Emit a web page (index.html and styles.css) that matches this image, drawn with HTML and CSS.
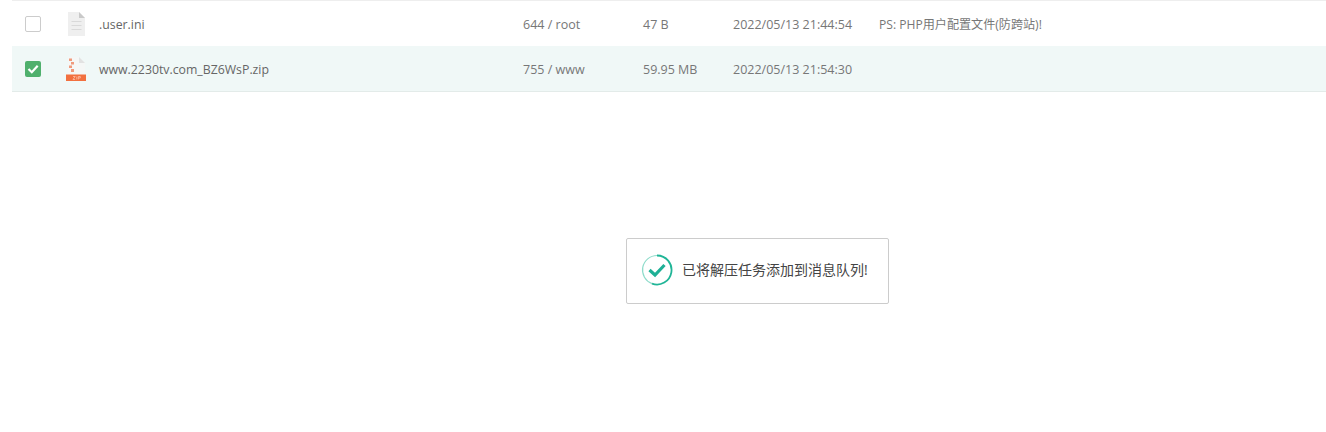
FILE: index.html
```html
<!DOCTYPE html>
<html lang="zh">
<head>
<meta charset="utf-8">
<title>文件管理</title>
<link rel="stylesheet" href="styles.css">
</head>
<body>
<div class="list">
  <div class="row">
    <span class="cell-check"><span class="checkbox"></span></span>
    <span class="cell-icon">
      <svg class="file-icon" viewBox="0 0 20 24" width="20" height="24">
        <path d="M2 0H13L19 6V24H2Z" fill="#efefef"/>
        <path d="M13 0L19 6H13Z" fill="#c9c9c9"/>
        <path d="M5.500 9.500H15.500M5.500 13.500H15.500M5.500 17.500H15.500" stroke="#d9d9d9" stroke-width="1.200" fill="none"/>
      </svg>
    </span>
    <span class="cell-text name">.user.ini</span>
    <span class="cell-text perm">644 / root</span>
    <span class="cell-text size">47 B</span>
    <span class="cell-text date">2022/05/13 21:44:54</span>
    <span class="cell-text note">PS: PHP用户配置文件(防跨站)!</span>
  </div>
  <div class="row selected">
    <span class="cell-check">
      <span class="checkbox checked">
        <svg viewBox="0 0 16 16" width="16" height="16"><path d="M3.500 8L6.800 11.200L12.700 4.800" fill="none" stroke="#fff" stroke-width="2.200"/></svg>
      </span>
    </span>
    <span class="cell-icon">
      <svg class="file-icon" viewBox="0 0 20 24" width="20" height="24">
        <path d="M2 0H13L19 6V24H2Z" fill="#f5f7f6"/>
        <path d="M13 0L19 6H13Z" fill="#e2e2e2"/>
        <path d="M3 1.500H6V4H3ZM5 5H8V7.500H5ZM3 8.500H6V11H3ZM5 12H8V15H5Z" fill="#f09a7c"/>
        <rect x="0" y="17.500" width="20" height="6.500" fill="#f2703f"/>
        <path d="M7 19.500H9.200L7 22.500H9.200M10.800 19.500V22.500M12.300 22.500V19.500H14.300V21H12.300" fill="none" stroke="#ffc9b4" stroke-width=".7"/>
      </svg>
    </span>
    <span class="cell-text name">www.2230tv.com_BZ6WsP.zip</span>
    <span class="cell-text perm">755 / www</span>
    <span class="cell-text size">59.95 MB</span>
    <span class="cell-text date">2022/05/13 21:54:30</span>
  </div>
</div>
<div class="toast">
  <svg class="toast-icon" viewBox="0 0 32 32" width="32" height="32">
    <path d="M16 1.500A14.500 14.500 0 1 1 11 29.600" fill="none" stroke="#20b597" stroke-width="1.800"/>
    <path d="M11 29.600A14.500 14.500 0 0 1 16 1.500" fill="none" stroke="#8fdccb" stroke-width="1.200"/>
    <path d="M8.500 16L14 21L23.500 11" fill="none" stroke="#1fb096" stroke-width="3.200"/>
  </svg>
  <span class="toast-text">已将解压任务添加到消息队列!</span>
</div>
</body>
</html>
```
FILE: styles.css
```css
html, body {
  margin: 0;
  padding: 0;
  background: #fff;
}
body {
  height: 432px;
  overflow: hidden;
  font-family: "Open Sans", "Noto Sans CJK SC", sans-serif;
  font-size: 12px;
  color: #666;
}
.list {
  margin-left: 12px;
  border-top: 1px solid #eee;
}
.row {
  display: flex;
  align-items: center;
  height: 45px;
  white-space: nowrap;
}
.selected {
  background: #f0f8f7;
  border-bottom: 1px solid #e3ebe9;
}
.cell-check {
  display: flex;
  width: 54px;
  padding-left: 13px;
  box-sizing: border-box;
}
.checkbox {
  display: block;
  width: 16px;
  height: 16px;
  box-sizing: border-box;
  border: 1px solid #ccc;
  border-radius: 2px;
  background: #fff;
}
.checked {
  border: 0;
  background: #4fb06d;
}
.checked svg {
  display: block;
}
.cell-icon {
  display: flex;
  width: 33px;
}
.file-icon {
  display: block;
}
.cell-text {
  padding-top: 2px;
  color: #777;
  font-size: 12.500px;
  line-height: 17px;
}
.name {
  width: 424px;
  color: #666;
  font-size: 12.300px;
}
.perm {
  width: 120px;
}
.size {
  width: 90px;
}
.date {
  width: 146px;
}
.note {
  font-size: 12.100px;
}
.toast {
  position: absolute;
  left: 626px;
  top: 238px;
  display: flex;
  align-items: center;
  gap: 9px;
  box-sizing: border-box;
  width: 263px;
  height: 66px;
  padding-left: 14px;
  border: 1px solid #ccc;
  border-radius: 2px;
  background: #fff;
}
.toast-icon {
  flex: none;
  margin-bottom: 2px;
}
.toast-text {
  padding-bottom: 4px;
  color: #444;
  font-size: 14px;
  white-space: nowrap;
}
```
